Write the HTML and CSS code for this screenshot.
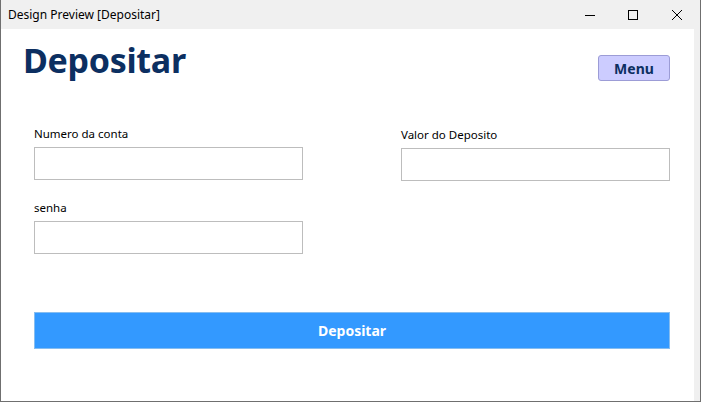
FILE: index.html
```html
<!DOCTYPE html>
<html lang="pt">
<head>
<meta charset="utf-8">
<title>Design Preview [Depositar]</title>
<link rel="stylesheet" href="styles.css">
</head>
<body>
<div class="window">
  <div class="titlebar">
    <span class="title">Design Preview [Depositar]</span>
    <div class="controls">
      <span class="ctl"><svg width="10" height="10" viewBox="0 0 10 10"><path d="M0 5.5H10" stroke="#000" stroke-width="1"/></svg></span>
      <span class="ctl"><svg width="10" height="10" viewBox="0 0 10 10"><rect x="0.5" y="0.5" width="9" height="9" fill="none" stroke="#000" stroke-width="1"/></svg></span>
      <span class="ctl"><svg width="10" height="10" viewBox="0 0 10 10"><path d="M0 0L10 10M10 0L0 10" stroke="#000" stroke-width="1"/></svg></span>
    </div>
  </div>
  <div class="body">
    <div class="content">
      <div class="header">
        <h1 class="heading">Depositar</h1>
        <button class="menu-btn">Menu</button>
      </div>
      <div class="form">
        <div class="col">
          <div class="field">
            <label class="label">Numero da conta</label>
            <input class="input" type="text">
          </div>
          <div class="field">
            <label class="label">senha</label>
            <input class="input" type="password">
          </div>
        </div>
        <div class="col">
          <div class="field field-right">
            <label class="label">Valor do Deposito</label>
            <input class="input" type="text">
          </div>
        </div>
      </div>
      <button class="submit">Depositar</button>
    </div>
    <div class="strip"></div>
  </div>
</div>
</body>
</html>
```
FILE: styles.css
```css
html, body {
  margin: 0;
  padding: 0;
  background: #ffffff;
}
body {
  width: 701px;
  height: 403px;
  overflow: hidden;
  font-family: "Noto Sans", "Open Sans", sans-serif;
}
.window {
  box-sizing: border-box;
  width: 701px;
  height: 402px;
  border-left: 1px solid #6f6f6f;
  border-right: 1px solid #6f6f6f;
  border-bottom: 1px solid #6f6f6f;
  display: flex;
  flex-direction: column;
}
.titlebar {
  height: 29px;
  background: #f0f0f0;
  display: flex;
  align-items: center;
  justify-content: space-between;
  flex-shrink: 0;
}
.title {
  font-size: 12px;
  color: #000;
  padding-left: 7px;
  padding-bottom: 1px;
}
.controls {
  display: flex;
  height: 29px;
}
.ctl {
  width: 43px;
  display: flex;
  align-items: center;
  justify-content: center;
}
.ctl:last-child {
  width: 46px;
}
.body {
  flex: 1;
  display: flex;
}
.content {
  flex: 1;
  background: #ffffff;
  padding: 0 24px 0 33px;
  display: flex;
  flex-direction: column;
}
.strip {
  width: 6px;
  background: #f0f0f0;
}
.header {
  display: flex;
  justify-content: space-between;
  align-items: flex-start;
  margin-left: -11px;
  height: 99px;
}
.heading {
  margin: 9px 0 0;
  font-size: 34px;
  font-weight: 700;
  color: #0c2f61;
  letter-spacing: -0.3px;
  line-height: 44px;
}
.menu-btn {
  margin-top: 26px;
  width: 72px;
  height: 26px;
  background: #ccccff;
  border: 1px solid #9c9cd6;
  border-radius: 3px;
  font-family: inherit;
  font-size: 14px;
  font-weight: 700;
  color: #0c2f61;
  padding: 0;
}
.form {
  display: grid;
  grid-template-columns: 269px 269px;
  justify-content: space-between;
}
.col {
  display: flex;
  flex-direction: column;
  gap: 22px;
}
.field {
  display: flex;
  flex-direction: column;
  gap: 7px;
}
.field-right {
  margin-top: 1px;
}
.label {
  font-size: 11.5px;
  color: #000;
  line-height: 12px;
}
.input {
  box-sizing: border-box;
  width: 269px;
  height: 33px;
  border: 1px solid #bdbdbd;
  margin: 0;
  padding: 0 6px;
  background: #fff;
}
.submit {
  margin-top: 58px;
  height: 37px;
  background: #3399ff;
  border: 1px solid #86bdf0;
  color: #ffffff;
  font-family: inherit;
  font-size: 14px;
  font-weight: 700;
  padding: 0;
}
```
